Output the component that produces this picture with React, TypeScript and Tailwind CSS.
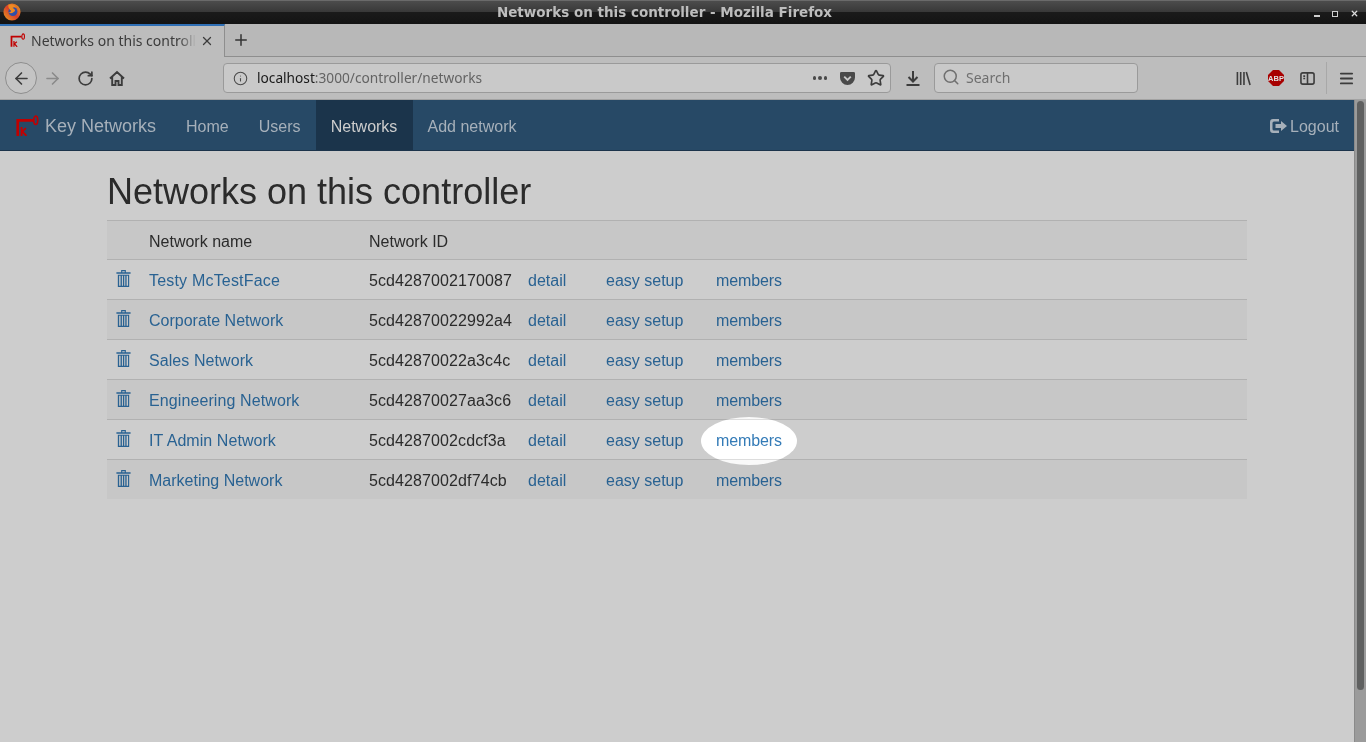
import { Info, Search, Star, ArrowLeft, ArrowRight, RotateCw, Plus, X, Menu } from 'lucide-react';

const networks = [
  { name: 'Testy McTestFace', id: '5cd4287002170087', spacing: 'tracking-[0.19px]' },
  { name: 'Corporate Network', id: '5cd42870022992a4', spacing: '' },
  { name: 'Sales Network', id: '5cd42870022a3c4c', spacing: 'tracking-[0.08px]' },
  { name: 'Engineering Network', id: '5cd42870027aa3c6', spacing: 'tracking-[0.1px]' },
  { name: 'IT Admin Network', id: '5cd4287002cdcf3a', spacing: 'tracking-[0.06px]' },
  { name: 'Marketing Network', id: '5cd4287002df74cb', spacing: '' },
];

function KeyLogo({ className }: { className?: string }) {
  return (
    <svg viewBox="0 0 22 20" className={className} fill="none">
      <path d="M2.200 20V5.200H17" stroke="#c00000" strokeWidth="2.600" />
      <ellipse cx="19.300" cy="5" rx="1.900" ry="4" stroke="#c00000" strokeWidth="1.600" />
      <path d="M5.800 11.500V20M10 12.500L6.500 15.500 10.500 20" stroke="#c00000" strokeWidth="1.800" />
    </svg>
  );
}

function FirefoxLogo() {
  return (
    <svg viewBox="0 0 20 20" className="w-[18px] h-[18px]">
      <defs>
        <linearGradient id="ffRing" x1="1" y1="0" x2="0" y2="1">
          <stop offset="0" stopColor="#e8a020" />
          <stop offset="0.5" stopColor="#d8402a" />
          <stop offset="1" stopColor="#e8a020" />
        </linearGradient>
      </defs>
      <circle cx="10" cy="10" r="9.500" fill="url(#ffRing)" />
      <circle cx="11" cy="9.500" r="5" fill="#2f4fa8" />
      <path d="M6 2c3-1.500 7 0 8.500 3-1.500-.5-3-.5-4 .5 1 .5 2.500 1 3 2.500-1 3-5.500 4.500-8 2 1.500.5 3 0 3.500-1.500C7.500 8 5.500 5 6 2z" fill="#ef8a22" />
    </svg>
  );
}

function WindowTitle() {
  return (
    <div className="h-6 shrink-0 relative flex items-center justify-center pr-[37px] bg-[linear-gradient(#4c4c4c_0,#383838_48%,#1a1a1a_50%,#141414_100%)] border-t border-[#6a6a6a]">
      <div className="absolute left-[3px] top-[2px]"><FirefoxLogo /></div>
      <span className="text-[13.500px] font-bold text-[#bdbdbd] font-['DejaVu_Sans',sans-serif]">Networks on this controller - Mozilla Firefox</span>
      <div className="absolute right-[7px] top-[8px] flex items-center gap-[12px]">
        <span className="w-[6px] h-[2px] mt-[5px] bg-[#cfcfcf]" />
        <span className="w-[6px] h-[6px] border border-[#cfcfcf]" />
        <X size={9} strokeWidth={3.500} className="text-[#dcdcdc]" />
      </div>
    </div>
  );
}

function TabBar() {
  return (
    <div className="h-[33px] shrink-0 flex bg-[#b8b8b8] font-['Noto_Sans',sans-serif]">
      <div className="w-[225px] flex items-center pl-[10px] pr-[10px] pb-[2px] bg-[#bdbdbd] border-t-2 border-t-[#2f6fb5] border-r border-r-[#8e8e8e]">
        <KeyLogo className="w-[15px] h-[14px] shrink-0 -mt-[1px]" />
        <div className="ml-[6px] w-[165px] overflow-hidden whitespace-nowrap text-[14px] text-[#3c3c3c] [mask-image:linear-gradient(90deg,#000_90%,transparent)]">Networks on this controller</div>
        <X size={14} strokeWidth={2.200} className="ml-auto text-[#3c3c3c]" />
      </div>
      <div className="flex-1 flex border-b border-[#8e8e8e]">
        <div className="w-[31px] flex items-center justify-center">
          <Plus size={18} strokeWidth={2} className="text-[#333333]" />
        </div>
      </div>
    </div>
  );
}

function Toolbar() {
  return (
    <div className="h-[43px] shrink-0 flex items-center bg-[#bdbdbd] border-b border-[#a2a2a2] font-['Noto_Sans',sans-serif]">
      <div className="ml-[5px] w-8 h-8 rounded-full border border-[#8e8e8e] bg-[#c4c4c4] flex items-center justify-center">
        <ArrowLeft size={19} strokeWidth={2} className="text-[#3c3c3c]" />
      </div>
      <ArrowRight size={19} strokeWidth={2} className="ml-[6px] text-[#8a8a8a]" />
      <RotateCw size={17} strokeWidth={2.400} className="ml-[15px] text-[#3c3c3c]" />
      <svg viewBox="0 0 16 16" className="ml-[15px] w-4 h-4 text-[#3c3c3c]" fill="none" stroke="currentColor" strokeWidth="1.900">
        <path d="M1 8.500l7-6.500 7 6.500M3.200 6.500V15H6.500v-4h3v4h3.300V6.500" />
      </svg>
      <div className="ml-[98px] w-[668px] h-[30px] rounded-[4px] border border-[#9a9a9a] bg-[#c9c9c9] flex items-center pl-[9px] pr-[5px]">
        <Info size={15} strokeWidth={1.700} className="text-[#4a4a4a]" />
        <span className="ml-[9px] text-[13.700px] text-[#1a1a1a]">localhost<span className="text-[#636363]">:3000/controller/networks</span></span>
        <span className="ml-auto flex gap-[2px]">
          <span className="w-[3.500px] h-[3.500px] rounded-full bg-[#4a4a4a]" />
          <span className="w-[3.500px] h-[3.500px] rounded-full bg-[#4a4a4a]" />
          <span className="w-[3.500px] h-[3.500px] rounded-full bg-[#4a4a4a]" />
        </span>
        <svg viewBox="0 0 16 16" className="ml-[13px] w-[15px] h-[15px]">
          <path d="M1.500 1h13A1.500 1.500 0 0 1 16 2.500V7a8 8 0 0 1-16 0V2.500A1.500 1.500 0 0 1 1.500 1z" fill="#4a4a4a" />
          <path d="M4.500 6L8 9.500 11.500 6" stroke="#c9c9c9" strokeWidth="2" fill="none" />
        </svg>
        <Star size={18} strokeWidth={2.200} className="ml-[12px] text-[#3c3c3c]" />
      </div>
      <svg viewBox="0 0 16 16" className="ml-[14px] w-4 h-4 text-[#3c3c3c]" fill="none" stroke="currentColor" strokeWidth="2">
        <path d="M8 1v10M3.500 7L8 11.500 12.500 7M1.500 15h13" />
      </svg>
      <div className="ml-[13px] w-[204px] h-[30px] rounded-[4px] border border-[#9a9a9a] bg-[#c9c9c9] flex items-center pl-[7px] pb-[2px]">
        <Search size={18} strokeWidth={2} className="text-[#6f6f6f]" />
        <span className="ml-[6px] text-[14px] text-[#6f6f6f]">Search</span>
      </div>
      <svg viewBox="0 0 16 16" className="ml-[98px] w-[15px] h-[15px] text-[#3c3c3c]" fill="none" stroke="currentColor" strokeWidth="1.700">
        <path d="M1.500 1v14M5 1v14M8.500 1v14M11 1l4 14" />
      </svg>
      <svg viewBox="0 0 16 16" className="ml-[17px] w-4 h-4">
        <path d="M5 0h6l5 5v6l-5 5H5l-5-5V5z" fill="#a80000" />
        <text x="8" y="10.500" textAnchor="middle" fontSize="7.500" fontWeight="bold" fill="#e0e0e0" fontFamily="Liberation Sans, sans-serif">ABP</text>
      </svg>
      <svg viewBox="0 0 16 16" className="ml-[16px] w-[15px] h-[15px] text-[#3c3c3c]" fill="none" stroke="currentColor" strokeWidth="1.700">
        <rect x="1" y="2" width="14" height="12" rx="2" />
        <path d="M8 2v12M3.500 5.500h2M3.500 8h2" />
      </svg>
      <div className="ml-[11px] w-px h-8 bg-[#a8a8a8]" />
      <Menu size={17} strokeWidth={2.500} className="ml-[11px] text-[#3c3c3c]" />
    </div>
  );
}

function Navbar() {
  return (
    <nav className="h-[51px] shrink-0 flex bg-[#274966] border-b border-[#1c344b] text-[16px] text-[#a6b0ba]">
      <a className="flex items-center pl-[15px] pr-[15px] pt-[2px] text-[18px]">
        <KeyLogo className="w-[24px] h-[21px] mr-[6px] -mt-[2px]" />
        Key Networks
      </a>
      <a className="flex items-center px-[15px] pt-[4px]">Home</a>
      <a className="flex items-center px-[15px] pt-[4px]">Users</a>
      <a className="flex items-center justify-center w-[97px] pt-[4px] bg-[#1b344b] text-[#cdcdcd]">Networks</a>
      <a className="flex items-center px-[15px] pt-[4px]">Add network</a>
      <a className="ml-auto flex items-center pr-[15px] pt-[4px]">
        <svg viewBox="0 0 17 14" className="w-[17px] h-[14px] mr-[3px] -mt-[3px]" fill="currentColor">
          <path d="M3 0h6v2.500H4A1.500 1.500 0 0 0 2.500 4v6A1.500 1.500 0 0 0 4 11.500h5V14H3a3 3 0 0 1-3-3V3a3 3 0 0 1 3-3z" />
          <path d="M5.500 5H11V2l6 5-6 5V9H5.500z" />
        </svg>
        Logout
      </a>
    </nav>
  );
}

function TrashIcon() {
  return (
    <svg viewBox="0 0 15 18" className="w-[15px] h-[17px] -mt-[2px]" fill="currentColor">
      <path d="M5 0h5v2.500h5V4H0V2.500h5zM6.200 1.200v1.300h2.600V1.200z" fillRule="evenodd" />
      <path d="M1.500 5h12v13h-12zM2.900 6.200v10.600h1.500V6.200zM5.800 6.200v10.600h1.100V6.200zM8.300 6.200v10.600h1.100V6.200zM10.800 6.200v10.600h1.500V6.200z" fillRule="evenodd" />
    </svg>
  );
}

function NetworkTable() {
  return (
    <table className="w-full table-fixed border-collapse text-[16px] leading-[23px] text-[#2b2b2b]">
      <thead>
        <tr className="h-[39px] bg-[#c7c7c7] border-t border-[#b1b1b1]">
          <th className="w-[34px]" />
          <th className="w-[220px] px-2 pt-[2px] text-left font-normal">Network name</th>
          <th className="w-[159px] px-2 pt-[2px] text-left font-normal">Network ID</th>
          <th className="w-[78px]" />
          <th className="w-[110px]" />
          <th />
        </tr>
      </thead>
      <tbody className="text-[#296292]">
        {networks.map((n, i) => (
          <tr key={n.id} className={`border-t border-[#b1b1b1] ${i === 5 ? 'h-[39px]' : 'h-[40px]'} ${i % 2 === 0 ? 'bg-[#cdcdcd]' : 'bg-[#c7c7c7]'}`}>
            <td className="pl-[9px]">
              <TrashIcon />
            </td>
            <td className={`px-2 pt-[2px] ${n.spacing}`}>{n.name}</td>
            <td className="px-2 pt-[2px] text-[#2b2b2b] tracking-[0.1px]">{n.id}</td>
            <td className="px-2 pt-[2px]">detail</td>
            <td className="px-2 pt-[2px]">easy setup</td>
            <td className="px-2 pt-[2px] tracking-[-0.1px]">
              <span className="relative">
                members
                {i === 4 && (
                  <span className="absolute left-[-15px] top-[-15px] w-[96px] h-[48px] rounded-[50%] bg-[#333333] mix-blend-color-dodge blur-[0.5px]" />
                )}
              </span>
            </td>
          </tr>
        ))}
      </tbody>
    </table>
  );
}

export default function App() {
  return (
    <div className="w-[1366px] h-[742px] overflow-hidden flex flex-col bg-[#cdcdcd] font-['Liberation_Sans',sans-serif]">
      <WindowTitle />
      <TabBar />
      <Toolbar />
      <div className="flex-1 flex min-h-0">
        <div className="flex-1 flex flex-col min-w-0">
          <Navbar />
          <main className="w-[1140px] ml-[107px]">
            <h1 className="mt-[21px] mb-[8px] text-[36px] leading-[40px] text-[#2b2b2b]">Networks on this controller</h1>
            <NetworkTable />
          </main>
        </div>
        <div className="w-[12px] bg-[#9b9b9b] border-l border-[#8a8a8a] pl-[2px] pr-[2px] pt-[1px]">
          <div className="w-[7px] h-[589px] rounded-full bg-[#5f6060]" />
        </div>
      </div>
    </div>
  );
}
